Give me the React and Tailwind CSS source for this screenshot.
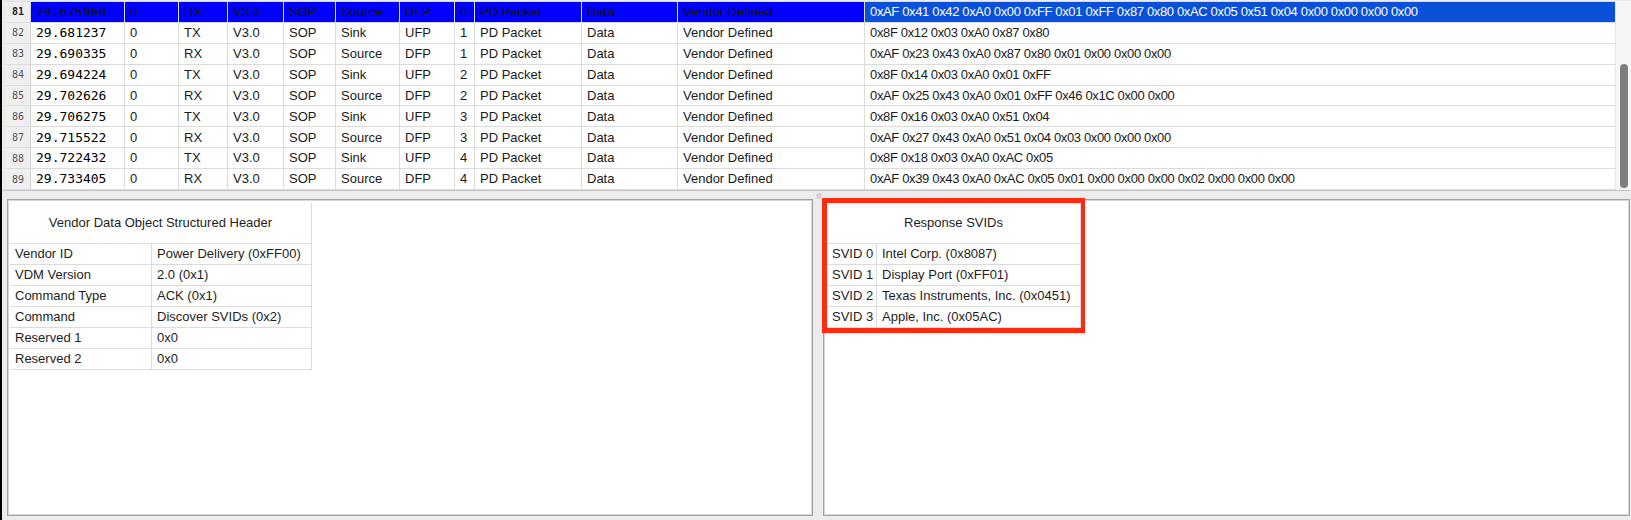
import React from "react";

const rows = [
  ["81", "29.675960", "0", "RX", "V3.0", "SOP", "Source", "DFP", "0", "PD Packet", "Data", "Vendor Defined", "0xAF 0x41 0x42 0xA0 0x00 0xFF 0x01 0xFF 0x87 0x80 0xAC 0x05 0x51 0x04 0x00 0x00 0x00 0x00"],
  ["82", "29.681237", "0", "TX", "V3.0", "SOP", "Sink", "UFP", "1", "PD Packet", "Data", "Vendor Defined", "0x8F 0x12 0x03 0xA0 0x87 0x80"],
  ["83", "29.690335", "0", "RX", "V3.0", "SOP", "Source", "DFP", "1", "PD Packet", "Data", "Vendor Defined", "0xAF 0x23 0x43 0xA0 0x87 0x80 0x01 0x00 0x00 0x00"],
  ["84", "29.694224", "0", "TX", "V3.0", "SOP", "Sink", "UFP", "2", "PD Packet", "Data", "Vendor Defined", "0x8F 0x14 0x03 0xA0 0x01 0xFF"],
  ["85", "29.702626", "0", "RX", "V3.0", "SOP", "Source", "DFP", "2", "PD Packet", "Data", "Vendor Defined", "0xAF 0x25 0x43 0xA0 0x01 0xFF 0x46 0x1C 0x00 0x00"],
  ["86", "29.706275", "0", "TX", "V3.0", "SOP", "Sink", "UFP", "3", "PD Packet", "Data", "Vendor Defined", "0x8F 0x16 0x03 0xA0 0x51 0x04"],
  ["87", "29.715522", "0", "RX", "V3.0", "SOP", "Source", "DFP", "3", "PD Packet", "Data", "Vendor Defined", "0xAF 0x27 0x43 0xA0 0x51 0x04 0x03 0x00 0x00 0x00"],
  ["88", "29.722432", "0", "TX", "V3.0", "SOP", "Sink", "UFP", "4", "PD Packet", "Data", "Vendor Defined", "0x8F 0x18 0x03 0xA0 0xAC 0x05"],
  ["89", "29.733405", "0", "RX", "V3.0", "SOP", "Source", "DFP", "4", "PD Packet", "Data", "Vendor Defined", "0xAF 0x39 0x43 0xA0 0xAC 0x05 0x01 0x00 0x00 0x00 0x02 0x00 0x00 0x00"],
];

// widths of the middle columns (0 .. Vendor Defined)
const midWidths = ["w-[54px]", "w-[49px]", "w-[56px]", "w-[52px]", "w-[64px]", "w-[55px]", "w-[20px]", "w-[107px]", "w-[96px]", "w-[187px]"];

const sans = "font-['Liberation_Sans',Arial,sans-serif]";
const mono = "font-['DejaVu_Sans_Mono',monospace]";

const PacketRow = ({ row, selected }) => {
  const [num, time, ...rest] = row;
  const data = rest[rest.length - 1];
  const mid = rest.slice(0, -1);
  return (
    <div className="flex h-[21px] border-b border-[#dcdcdc]">
      <div className={`w-[25px] shrink-0 border-r border-[#d0d0d0] bg-[#efefef] pl-[6px] flex items-center text-[10px] ${mono} ${selected ? "font-bold text-[#222]" : "text-[#555]"}`}>
        {num}
      </div>
      <div className={`w-[94px] shrink-0 border-r border-[#dcdcdc] pl-[5px] flex items-center text-[13px] ${mono} ${selected ? "bg-[#0000ff] text-[#111]" : "bg-white text-black"}`}>
        {time}
      </div>
      {mid.map((v, i) => (
        <div
          key={i}
          className={`${midWidths[i]} shrink-0 border-r border-[#dcdcdc] pl-[5px] flex items-center text-[13px] whitespace-nowrap overflow-hidden ${sans} ${selected ? "bg-[#0000ff] text-[#111]" : "bg-white text-[#1a1a1a]"}`}
        >
          {v}
        </div>
      ))}
      <div className={`flex-1 pl-[5px] flex items-center text-[13px] tracking-[-0.35px] whitespace-nowrap ${sans} ${selected ? "bg-[#0b50d8] text-white" : "bg-white text-[#1a1a1a]"}`}>
        {data}
      </div>
    </div>
  );
};

const InfoTable = ({ title, rows, col1, col2 }) => (
  <div className={`inline-flex flex-col text-[13px] text-[#1e1e1e] ${sans}`}>
    <div className="h-[41px] border-b border-r border-[#dcdcdc] flex items-center justify-center">{title}</div>
    {rows.map(([k, v]) => (
      <div key={k} className="flex h-[21px] border-b border-[#dcdcdc]">
        <div className={`${col1} shrink-0 border-r border-[#dcdcdc] pl-[5px] flex items-center whitespace-nowrap`}>{k}</div>
        <div className={`${col2} shrink-0 border-r border-[#dcdcdc] pl-[5px] flex items-center whitespace-nowrap`}>{v}</div>
      </div>
    ))}
  </div>
);

const vdoRows = [
  ["Vendor ID", "Power Delivery (0xFF00)"],
  ["VDM Version", "2.0 (0x1)"],
  ["Command Type", "ACK (0x1)"],
  ["Command", "Discover SVIDs (0x2)"],
  ["Reserved 1", "0x0"],
  ["Reserved 2", "0x0"],
];

const svidRows = [
  ["SVID 0", "Intel Corp. (0x8087)"],
  ["SVID 1", "Display Port (0xFF01)"],
  ["SVID 2", "Texas Instruments, Inc. (0x0451)"],
  ["SVID 3", "Apple, Inc. (0x05AC)"],
];

const Panel = ({ children, className }) => (
  <div className={`border border-[#a3a3a3] ${className}`}>
    <div className="h-full border border-[#d6d6d6] bg-white">{children}</div>
  </div>
);

export default function App() {
  return (
    <div className="flex w-[1631px] h-[520px] bg-[#ececec] overflow-hidden">
      <div className="w-[2px] shrink-0 bg-black" />
      <div className="flex-1 flex flex-col">
        {/* packet list */}
        <div className="flex h-[191px] pl-[4px] pt-[1px] border-b border-[#c4c4c4]">
          <div className="flex-1 flex flex-col border-t border-[#dcdcdc] bg-white">
            {rows.map((r, i) => (
              <PacketRow key={r[0]} row={r} selected={i === 0} />
            ))}
          </div>
          <div className="w-[16px] shrink-0 bg-[#f6f6f6] border-l border-[#e4e4e4] relative">
            <div className="absolute left-[4px] top-[63px] w-[8px] h-[124px] rounded-full bg-[#7e7e7e]" />
          </div>
        </div>

        {/* splitter */}
        <div className="h-[8px] relative">
          <div className="absolute left-[814px] top-[2px] w-[6px] h-[6px] rounded-full bg-[#d2d2d2]" />
        </div>

        {/* detail panels */}
        <div className="flex h-[317px] pl-[5px] pr-px gap-[10px]">
          <Panel className="w-[806px] shrink-0">
            <div className="pt-[2px] pl-px">
              <InfoTable title="Vendor Data Object Structured Header" rows={vdoRows} col1="w-[142px]" col2="w-[160px]" />
            </div>
          </Panel>
          <Panel className="flex-1">
            <div className="pt-[2px] pl-[2px]">
              <div className="relative w-fit">
                <InfoTable title="Response SVIDs" rows={svidRows} col1="w-[50px]" col2="w-[204px]" />
                <div className="absolute -left-[5px] -top-[5px] -right-[4px] -bottom-[5px] border-[5px] border-r-[4px] border-[#ff2a12]" />
              </div>
            </div>
          </Panel>
        </div>
      </div>
    </div>
  );
}
